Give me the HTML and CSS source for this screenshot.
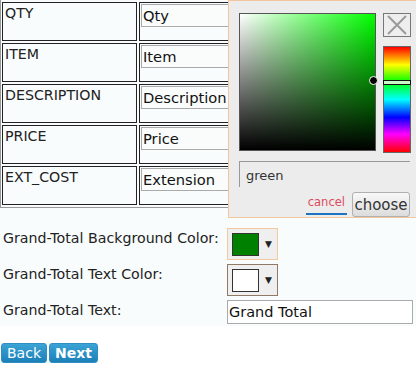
FILE: index.html
```html
<!DOCTYPE html>
<html>
<head>
<meta charset="utf-8">
<link rel="stylesheet" href="styles.css">
</head>
<body>
<div class="page">
  <div class="grid-wrap">
    <table class="fields">
      <tr><td class="lbl">QTY</td><td class="val"><input class="cell-input" value="Qty"></td></tr>
      <tr><td class="lbl">ITEM</td><td class="val"><input class="cell-input" value="Item"></td></tr>
      <tr><td class="lbl">DESCRIPTION</td><td class="val"><input class="cell-input" value="Description"></td></tr>
      <tr><td class="lbl">PRICE</td><td class="val"><input class="cell-input" value="Price"></td></tr>
      <tr><td class="lbl">EXT_COST</td><td class="val"><input class="cell-input" value="Extension"></td></tr>
    </table>
  </div>
  <div class="form">
    <div class="flabel">Grand-Total Background Color:</div>
    <div class="fctl"><div class="color-btn active"><span class="swatch green"></span><span class="arrow">▼</span></div></div>
    <div class="flabel">Grand-Total Text Color:</div>
    <div class="fctl"><div class="color-btn"><span class="swatch white"></span><span class="arrow">▼</span></div></div>
    <div class="flabel">Grand-Total Text:</div>
    <div class="fctl"><input class="text-input" value="Grand Total"></div>
  </div>
</div>
<div class="nav">
  <button class="navbtn">Back</button><button class="navbtn bold">Next</button>
</div>

<div class="picker">
  <div class="picker-top">
    <div class="sv"><span class="sv-dot"></span></div>
    <div class="side">
      <div class="close">
        <svg width="26" height="22" viewBox="0 0 26 22"><path d="M4 2 L22 20 M22 2 L4 20" stroke="#9a9a9a" stroke-width="2" fill="none"/></svg>
      </div>
      <div class="hue"><span class="hue-mark"></span></div>
    </div>
  </div>
  <div class="picker-input">green</div>
  <div class="picker-actions">
    <span class="cancel">cancel</span>
    <button class="choose">choose</button>
  </div>
</div>
</body>
</html>
```
FILE: styles.css
```css
html, body {
  margin: 0;
  padding: 0;
  background: #ffffff;
  font-family: "DejaVu Sans", Verdana, sans-serif;
  font-size: 13px;
  color: #222;
  overflow: hidden;
}
.page {
  background: #f9fcfc;
  padding-bottom: 2px;
}
.grid-wrap {
  margin-top: -1px;
  width: 300px;
  border: 1px solid #999;
  border-right: none;
}
.fields {
  border-collapse: separate;
  border-spacing: 2px;
  margin-left: -1px;
}
.fields td {
  border: 1px solid #222;
  height: 35px;
  padding: 0;
  vertical-align: top;
}
.lbl {
  width: 129px;
  padding: 2px 2px 0 2px !important;
  line-height: 17px;
  font-size: 14.2px;
  color: #222;
}
.val {
  width: 150px;
  padding: 1px !important;
}
.cell-input {
  display: block;
  width: 140px;
  height: 23px;
  box-sizing: border-box;
  border: 1px solid #aaa;
  font-family: "DejaVu Sans", Verdana, sans-serif;
  font-size: 14.7px;
  padding: 0 1px;
  margin: 0;
  color: #111;
  background: #fafcfc;
}
.form {
  display: grid;
  grid-template-columns: 224px 188px;
  row-gap: 4px;
  padding: 20px 0 0 3px;
}
.flabel {
  font-size: 14.2px;
  color: #222;
  padding-top: 2px;
  line-height: 17px;
  white-space: nowrap;
}
.fctl {
  display: flex;
}
.color-btn {
  width: 51px;
  height: 32px;
  box-sizing: border-box;
  border: 1px solid #8f7a66;
  background: #efefef;
  display: flex;
  align-items: center;
  padding-left: 4px;
  gap: 6px;
}
.color-btn.active {
  border-color: #f3c89e;
}
.swatch {
  width: 27px;
  height: 23px;
  box-sizing: border-box;
  border: 1px solid #333;
  display: block;
}
.swatch.green { background: #008000; }
.swatch.white { background: #ffffff; }
.arrow {
  font-size: 9px;
  color: #222;
}
.text-input {
  width: 186px;
  height: 24px;
  box-sizing: border-box;
  border: 1px solid #aaa;
  background: #fff;
  font-family: "DejaVu Sans", Verdana, sans-serif;
  font-size: 14.5px;
  padding: 0 1px;
  margin: 0;
  color: #111;
}
.nav {
  padding: 17px 0 0 1px;
  display: flex;
  gap: 2px;
}
.navbtn {
  height: 20px;
  border: 1px solid #2f8fc0;
  border-radius: 3px;
  background: linear-gradient(#3ba3d6, #1b80b8);
  color: #fff;
  font-family: "DejaVu Sans", Verdana, sans-serif;
  font-size: 14px;
  padding: 0 5px;
  line-height: 17px;
  margin: 0;
}
.navbtn.bold { font-weight: bold; padding: 0 5px; }

.picker {
  position: absolute;
  left: 228px;
  top: 0;
  width: 196px;
  height: 218px;
  box-sizing: border-box;
  border: 1px solid #f3c6a0;
  background: #ececec;
  padding: 12px 0 0 10px;
}
.picker-top {
  display: flex;
  gap: 7px;
}
.sv {
  position: relative;
  width: 137px;
  height: 138px;
  box-sizing: border-box;
  border: 1px solid #555;
  background: linear-gradient(to top, #000, rgba(0,0,0,0)), linear-gradient(to right, #fff, #00ff00);
}
.sv-dot {
  position: absolute;
  right: -3px;
  top: 62px;
  width: 7px;
  height: 7px;
  border-radius: 50%;
  background: #000;
  border: 1px solid #fff;
}
.side {
  display: flex;
  flex-direction: column;
  gap: 9px;
}
.close {
  width: 28px;
  height: 24px;
  box-sizing: border-box;
  border: 1px solid #777;
  background: #eeeeee;
  display: flex;
}
.hue {
  position: relative;
  width: 28px;
  height: 107px;
  box-sizing: border-box;
  border: 1px solid #666;
  background: linear-gradient(#ff0000, #ffff00 17%, #00ff00 33%, #00ffff 50%, #0000ff 67%, #ff00ff 83%, #ff0000);
}
.hue-mark {
  position: absolute;
  left: -1px;
  right: -1px;
  top: 33px;
  height: 3px;
  background: #c8f7c8;
  border: 1px solid #111;
}
.picker-input {
  margin-top: 8px;
  width: 171px;
  height: 26px;
  box-sizing: border-box;
  border-top: 1px solid #999;
  border-left: 1px solid #999;
  font-size: 13px;
  color: #333;
  padding: 6px 0 0 6px;
}
.picker-actions {
  display: flex;
  align-items: flex-end;
  justify-content: flex-end;
  width: 171px;
  height: 25px;
  margin-top: 5px;
  gap: 5px;
}
.cancel {
  font-size: 11.5px;
  line-height: 14px;
  color: #dc4a5c;
  padding: 0 2px 4px 2px;
  border-bottom: 2px solid #1c74c0;
  margin-bottom: 2px;
}
.choose {
  width: 58px;
  height: 25px;
  box-sizing: border-box;
  border: 1px solid #b0b0b0;
  border-radius: 3px;
  background: linear-gradient(#f8f8f8, #dcdcdc);
  font-family: "DejaVu Sans", Verdana, sans-serif;
  font-size: 15px;
  color: #333;
  padding: 0;
  margin: 0;
}
```
